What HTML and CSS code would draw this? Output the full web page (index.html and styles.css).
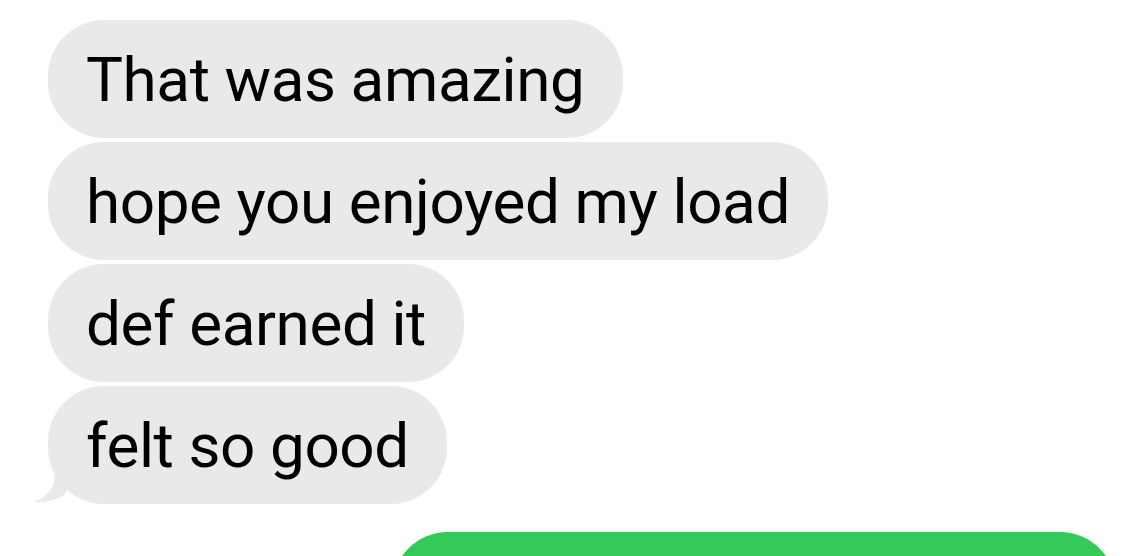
FILE: index.html
```html
<!DOCTYPE html>
<html lang="en">
<head>
    <meta charset="UTF-8">
    <meta name="viewport" content="width=device-width, initial-scale=1.0">
    <title>Messages</title>
    <link rel="stylesheet" href="styles.css">
</head>
<body>
    <div class="thread">
        <div class="bubble received">That was amazing</div>
        <div class="bubble received">hope you enjoyed my load</div>
        <div class="bubble received">def earned it</div>
        <div class="bubble received last">
            felt so good
            <svg class="tail" width="40" height="30" viewBox="0 0 40 30">
                <path d="M22 0 C22 14 14 24 0 28 C12 29 24 26 32 20 L40 0 Z" fill="#e9e9eb"/>
            </svg>
        </div>
        <div class="bubble sent"></div>
    </div>
</body>
</html>
```

FILE: styles.css
```css
body {
    margin: 0;
    height: 556px;
    background: #fff;
    font-family: 'Roboto', 'Liberation Sans', sans-serif;
    overflow: hidden;
}
.thread {
    display: flex;
    flex-direction: column;
    align-items: flex-start;
    gap: 4px;
    padding: 20px 32px 0 48px;
}
.bubble {
    position: relative;
    box-sizing: border-box;
    height: 118px;
    padding: 0 38px;
    display: flex;
    align-items: center;
    border-radius: 56px;
    font-size: 62px;
    letter-spacing: -0.4px;
    color: #000;
}
.received {
    background: #e9e9eb;
}
.tail {
    position: absolute;
    left: -15px;
    bottom: 0;
}
.sent {
    background: #35c95a;
    align-self: flex-end;
    width: 724px;
    margin-top: 24px;
}
```
